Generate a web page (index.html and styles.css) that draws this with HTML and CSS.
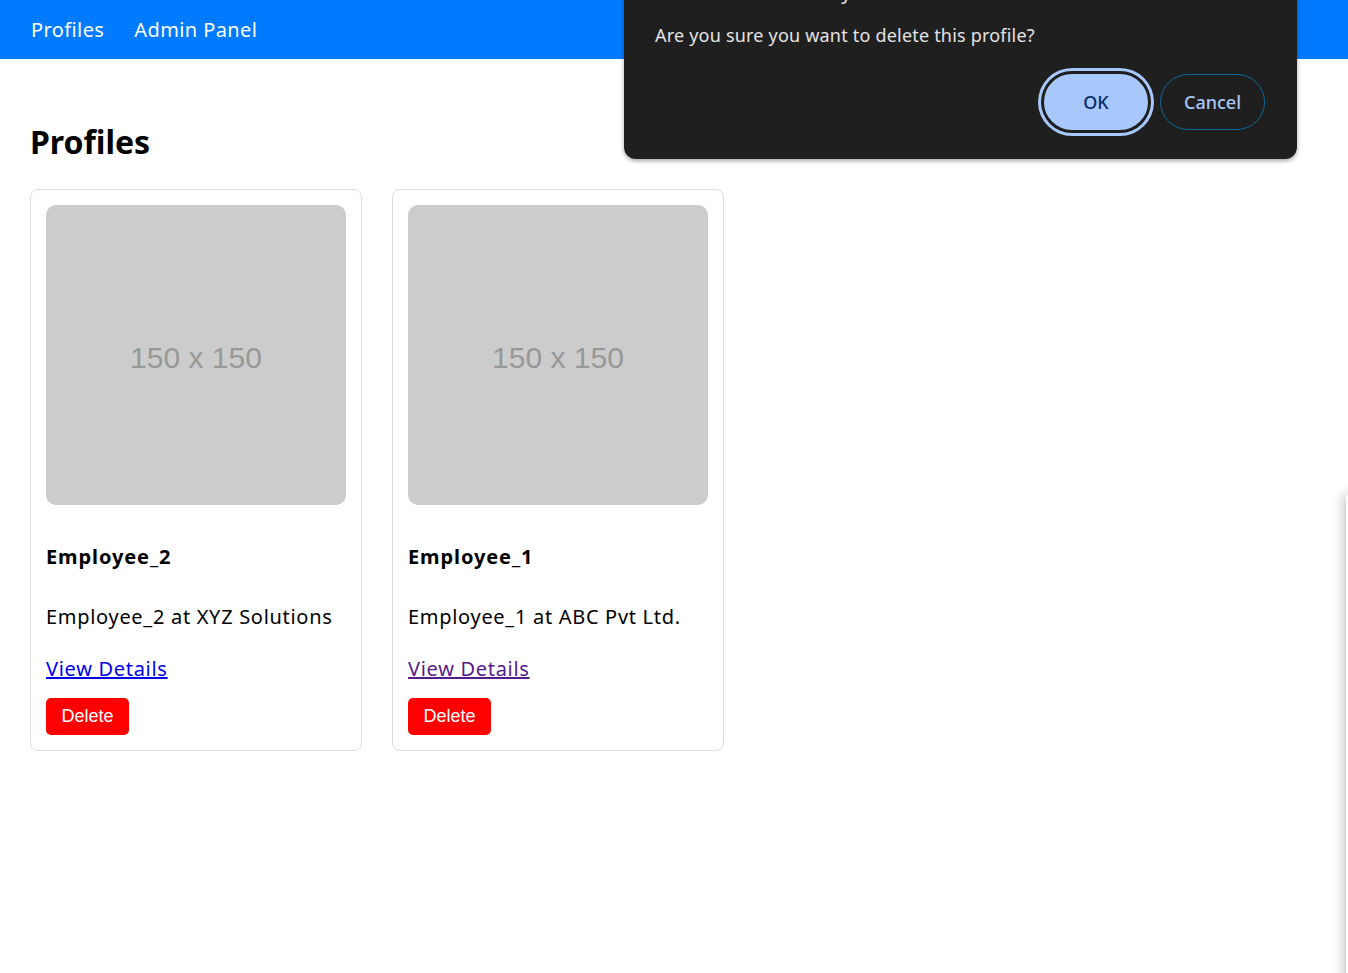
FILE: index.html
```html
<!DOCTYPE html>
<html lang="en">
<head>
<meta charset="utf-8">
<title>Profiles</title>
<link rel="stylesheet" href="styles.css">
</head>
<body>
<nav class="navbar">
  <a class="nav-link" href="#">Profiles</a>
  <a class="nav-link" href="#">Admin Panel</a>
</nav>
<main class="container">
  <h2 class="page-title">Profiles</h2>
  <div class="grid">
    <div class="card">
      <div class="placeholder">150 x 150</div>
      <h3 class="name">Employee_2</h3>
      <p class="desc">Employee_2 at XYZ Solutions</p>
      <a class="details" href="#">View Details</a>
      <button class="delete">Delete</button>
    </div>
    <div class="card">
      <div class="placeholder">150 x 150</div>
      <h3 class="name">Employee_1</h3>
      <p class="desc">Employee_1 at ABC Pvt Ltd.</p>
      <a class="details visited" href="#">View Details</a>
      <button class="delete">Delete</button>
    </div>
  </div>
</main>
<div class="dialog">
  <div class="dialog-title">localhost:3000 says</div>
  <div class="dialog-msg">Are you sure you want to delete this profile?</div>
  <div class="dialog-actions">
    <button class="btn-ok">OK</button>
    <button class="btn-cancel">Cancel</button>
  </div>
</div>
<div class="side-panel"></div>
</body>
</html>
```
FILE: styles.css
```css
* { box-sizing: border-box; }
html, body { margin: 0; padding: 0; overflow: hidden; }
body {
  font-family: "Noto Sans", "Open Sans", sans-serif;
  background: #fff;
  color: #000;
  width: 1348px;
  height: 973px;
}
.navbar {
  background: #007bff;
  height: 59px;
  display: flex;
  align-items: center;
  gap: 30px;
  padding: 0 31px;
}
.nav-link {
  color: #fff;
  text-decoration: none;
  font-size: 20px;
  letter-spacing: 0.4px;
}
.container { padding: 0 30px; }
.page-title {
  margin: 0;
  padding-top: 61px;
  font-size: 32px;
  font-weight: 700;
  line-height: 44px;
  height: 130px;
}
.grid { display: flex; gap: 30px; }
.card {
  width: 332px;
  border: 1px solid #ddd;
  border-radius: 8px;
  padding: 15px;
  display: flex;
  flex-direction: column;
  align-items: flex-start;
}
.placeholder {
  width: 300px;
  height: 300px;
  background: #cccccc;
  border-radius: 10px;
  display: flex;
  align-items: center;
  justify-content: center;
  padding-top: 6px;
  font-family: "Liberation Sans", Arial, sans-serif;
  font-size: 30px;
  color: #989898;
}
.name {
  margin: 38px 0 0;
  font-size: 20px;
  line-height: 28px;
  font-weight: 700;
  letter-spacing: 0.9px;
}
.desc {
  margin: 32px 0 0;
  font-size: 20px;
  line-height: 28px;
  letter-spacing: 0.7px;
}
.details {
  margin-top: 24px;
  font-size: 20px;
  line-height: 28px;
  letter-spacing: 0.7px;
  color: #0000ee;
}
.details.visited { color: #551a8b; }
.delete {
  margin-top: 15px;
  height: 37px;
  width: 83px;
  padding: 0;
  background: #ff0000;
  color: #fff;
  border: none;
  border-radius: 5px;
  font-family: "Liberation Sans", Arial, sans-serif;
  font-size: 18px;
}
.dialog {
  position: absolute;
  left: 624px;
  top: -40px;
  width: 673px;
  height: 199px;
  background: #1f1f1f;
  border-radius: 12px;
  box-shadow: 0 2px 4px rgba(0,0,0,0.35);
  padding: 0 31px;
  color: #e3e3e3;
}
.dialog-title {
  font-size: 20px;
  line-height: 28px;
  margin-top: 18px;
  letter-spacing: 1.45px;
}
.dialog-msg {
  font-size: 18px;
  line-height: 26px;
  margin-top: 16px;
  letter-spacing: 0.2px;
}
.dialog-actions {
  display: flex;
  justify-content: flex-end;
  align-items: center;
  gap: 10px;
  margin-top: 24px;
  padding-right: 1px;
}
.dialog-actions button {
  border-radius: 30px;
  font-family: "Noto Sans", "Open Sans", sans-serif;
  font-size: 18px;
  font-weight: 500;
  padding: 0;
}
.btn-ok {
  width: 108px;
  height: 60px;
  background: #a8c7fa;
  color: #062e6f;
  border: 2px solid #1f1f1f;
  box-shadow: 0 0 0 1px #1f1f1f, 0 0 0 4px #a8c7fa;
}
.btn-cancel {
  width: 105px;
  height: 56px;
  background: transparent;
  color: #a8c7fa;
  border: 1px solid #0b6a9a;
}
.side-panel {
  position: absolute;
  left: 1346px;
  top: 495px;
  width: 300px;
  height: 600px;
  background: #fff;
  box-shadow: -2px 0 12px rgba(0,0,0,0.25);
}
```
